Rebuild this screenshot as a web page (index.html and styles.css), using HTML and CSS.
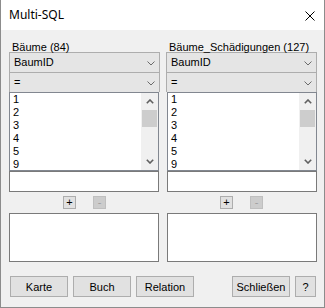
FILE: index.html
```html
<!DOCTYPE html>
<html lang="de">

<head>
    <meta charset="utf-8">
    <title>Multi-SQL</title>
    <link rel="stylesheet" href="styles.css">
</head>

<body>
    <div class="window">
        <header class="titlebar">
            <span class="title">Multi-SQL</span>
            <svg class="close" width="10" height="10" viewBox="0 0 10 10">
                <path d="M0.5 0.5 L9.5 9.5 M9.5 0.5 L0.5 9.5" stroke="#000" stroke-width="1" fill="none"/>
            </svg>
        </header>

        <main class="content">
            <div class="columns">
                <section class="column column-left">
                    <div class="label">Bäume (84)</div>
                    <div class="combo">
                        <span>BaumID</span>
                        <svg class="combo-arrow" width="8" height="5" viewBox="0 0 8 5"><path d="M0.5 0.5 L4 4 L7.5 0.5" stroke="#6b6b6b" fill="none"/></svg>
                    </div>
                    <div class="combo">
                        <span>=</span>
                        <svg class="combo-arrow" width="8" height="5" viewBox="0 0 8 5"><path d="M0.5 0.5 L4 4 L7.5 0.5" stroke="#6b6b6b" fill="none"/></svg>
                    </div>
                    <div class="list box">
                        <ul class="items">
                            <li>1</li>
                            <li>2</li>
                            <li>3</li>
                            <li>4</li>
                            <li>5</li>
                            <li>9</li>
                        </ul>
                        <div class="scrollbar">
                            <div class="scroll-btn">
                                <svg width="8" height="5" viewBox="0 0 8 5"><path d="M0.8 4.3 L4 1 L7.2 4.3" stroke="#606060" stroke-width="1.6" fill="none"/></svg>
                            </div>
                            <div class="thumb"></div>
                            <div class="track"></div>
                            <div class="scroll-btn">
                                <svg width="8" height="5" viewBox="0 0 8 5"><path d="M0.8 0.7 L4 4 L7.2 0.7" stroke="#606060" stroke-width="1.6" fill="none"/></svg>
                            </div>
                        </div>
                    </div>
                    <div class="textbox box"></div>
                    <div class="plusminus">
                        <span class="tiny">+</span>
                        <span class="tiny disabled">-</span>
                    </div>
                    <div class="memo box"></div>
                </section>

                <section class="column column-right">
                    <div class="label">Bäume_Schädigungen (127)</div>
                    <div class="combo">
                        <span>BaumID</span>
                        <svg class="combo-arrow" width="8" height="5" viewBox="0 0 8 5"><path d="M0.5 0.5 L4 4 L7.5 0.5" stroke="#6b6b6b" fill="none"/></svg>
                    </div>
                    <div class="combo">
                        <span>=</span>
                        <svg class="combo-arrow" width="8" height="5" viewBox="0 0 8 5"><path d="M0.5 0.5 L4 4 L7.5 0.5" stroke="#6b6b6b" fill="none"/></svg>
                    </div>
                    <div class="list box">
                        <ul class="items">
                            <li>1</li>
                            <li>2</li>
                            <li>3</li>
                            <li>4</li>
                            <li>5</li>
                            <li>9</li>
                        </ul>
                        <div class="scrollbar">
                            <div class="scroll-btn">
                                <svg width="8" height="5" viewBox="0 0 8 5"><path d="M0.8 4.3 L4 1 L7.2 4.3" stroke="#606060" stroke-width="1.6" fill="none"/></svg>
                            </div>
                            <div class="thumb"></div>
                            <div class="track"></div>
                            <div class="scroll-btn">
                                <svg width="8" height="5" viewBox="0 0 8 5"><path d="M0.8 0.7 L4 4 L7.2 0.7" stroke="#606060" stroke-width="1.6" fill="none"/></svg>
                            </div>
                        </div>
                    </div>
                    <div class="textbox box"></div>
                    <div class="plusminus">
                        <span class="tiny">+</span>
                        <span class="tiny disabled">-</span>
                    </div>
                    <div class="memo box"></div>
                </section>
            </div>

            <footer class="buttons">
                <button class="btn">Karte</button>
                <button class="btn">Buch</button>
                <button class="btn">Relation</button>
                <button class="btn btn-push">Schließen</button>
                <button class="btn btn-help">?</button>
            </footer>
        </main>
    </div>
</body>

</html>
```

FILE: styles.css
```css
html,
body {
    margin: 0;
    padding: 0;
}

body {
    font-family: "Liberation Sans", Arial, sans-serif;
    font-size: 11px;
    color: #000;
    background: #f0f0f0;
}

.window {
    box-sizing: border-box;
    width: 325px;
    height: 308px;
    border: 1px solid #8c8c8c;
    border-top: none;
    background: #f0f0f0;
}

/* title bar */
.titlebar {
    display: flex;
    align-items: center;
    justify-content: space-between;
    height: 30px;
    padding: 0 9px 0 8px;
    background: #fff;
}

.title {
    font-family: "Noto Sans", sans-serif;
    font-size: 12px;
    line-height: 30px;
}

.close {
    display: block;
    margin-top: 1px;
}

/* dialog body */
.content {
    padding: 10px 8px 0 8px;
}

.columns {
    display: grid;
    grid-template-columns: 151px 151px;
    column-gap: 6px;
}

.label {
    height: 12px;
    line-height: 14px;
    padding-left: 3px;
    white-space: nowrap;
}

.combo {
    box-sizing: border-box;
    display: flex;
    align-items: center;
    justify-content: space-between;
    height: 20px;
    padding: 0 4px 0 4px;
    border: 1px solid #adadad;
    border-bottom: none;
    background: #e5e5e5;
    line-height: 19px;
}

.combo-arrow {
    display: block;
    margin-top: 1px;
}

.box {
    box-sizing: border-box;
    background: #fff;
}

.column-left .box {
    margin-right: 1px;
}

.column-right .box {
    margin-left: 1px;
}

.list {
    display: flex;
    height: 79px;
    border: 1px solid #828790;
}

.items {
    flex: 1;
    margin: 0;
    padding: 0 0 0 3px;
    list-style: none;
    overflow: hidden;
}

.items li {
    line-height: 13px;
}

.scrollbar {
    display: flex;
    flex-direction: column;
    width: 17px;
    background: #f0f0f0;
}

.scroll-btn {
    display: flex;
    align-items: center;
    justify-content: center;
    height: 17px;
}

.scroll-btn svg {
    display: block;
}

.thumb {
    height: 17px;
    margin: 0 1px;
    background: #cdcdcd;
}

.track {
    flex: 1;
}

.textbox {
    height: 21px;
    border: 1px solid #7a7a7a;
}

.plusminus {
    display: flex;
    justify-content: center;
    gap: 17px;
    margin: 4px 0;
}

.tiny {
    box-sizing: border-box;
    width: 13px;
    height: 13px;
    border: 1px solid #adadad;
    background: #e1e1e1;
    font-size: 11px;
    line-height: 10px;
    text-align: center;
}

.tiny.disabled {
    border-color: #bfbfbf;
    background: #cccccc;
    color: #a0a0a0;
}

.memo {
    height: 49px;
    border: 1px solid #7a7a7a;
}

/* bottom buttons */
.buttons {
    display: flex;
    gap: 5px;
    margin-top: 14px;
    padding-left: 1px;
}

.btn {
    box-sizing: border-box;
    width: 58px;
    height: 21px;
    padding: 0;
    border: 1px solid #adadad;
    background: #e1e1e1;
    font-family: "Liberation Sans", Arial, sans-serif;
    font-size: 11px;
    color: #000;
}

.btn-push {
    margin-left: auto;
}

.btn-help {
    width: 21px;
}
```
